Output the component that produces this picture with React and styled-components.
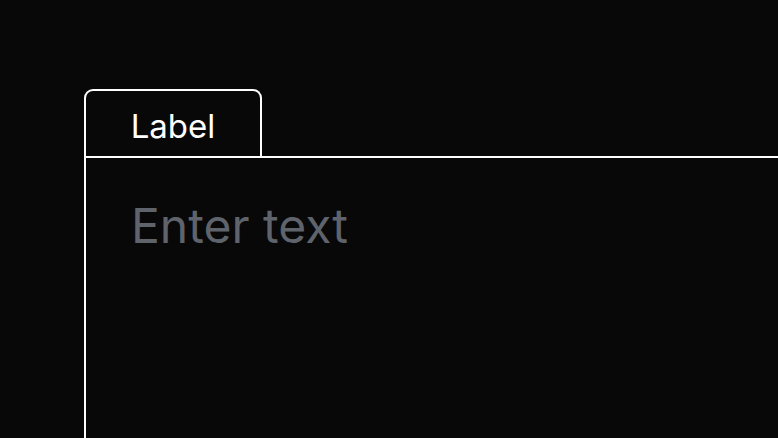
import React from 'react';
import styled, { createGlobalStyle } from 'styled-components';

const GlobalStyle = createGlobalStyle`
  html, body {
    margin: 0;
    padding: 0;
    background: #080808;
    overflow: hidden;
  }
  * {
    box-sizing: border-box;
  }
`;

const Page = styled.div`
  display: flex;
  flex-direction: column;
  height: 100vh;
  padding: 89px 0 0 84px;
  font-family: Inter, "Liberation Sans", sans-serif;
`;

const TabRow = styled.div`
  display: flex;
`;

const Tab = styled.label`
  display: flex;
  align-items: center;
  justify-content: center;
  width: 178px;
  height: 67px;
  border: 2px solid #ffffff;
  border-bottom: none;
  border-radius: 9px 9px 0 0;
  color: #ffffff;
  font-size: 33px;
  padding-top: 4px;
`;

const Field = styled.textarea`
  flex: 1;
  display: block;
  width: 100%;
  margin: 0;
  padding: 39px 20px 0 45px;
  background: transparent;
  border: none;
  border-top: 2px solid #ffffff;
  border-left: 2px solid #ffffff;
  border-radius: 0;
  color: #ffffff;
  font-family: inherit;
  font-size: 48px;
  line-height: 1.2;
  resize: none;
  outline: none;

  &::placeholder {
    color: #5f636b;
  }
`;

export default function App() {
  return (
    <>
      <GlobalStyle />
      <Page>
        <TabRow>
          <Tab htmlFor="entry">Label</Tab>
        </TabRow>
        <Field id="entry" placeholder="Enter text" />
      </Page>
    </>
  );
}
